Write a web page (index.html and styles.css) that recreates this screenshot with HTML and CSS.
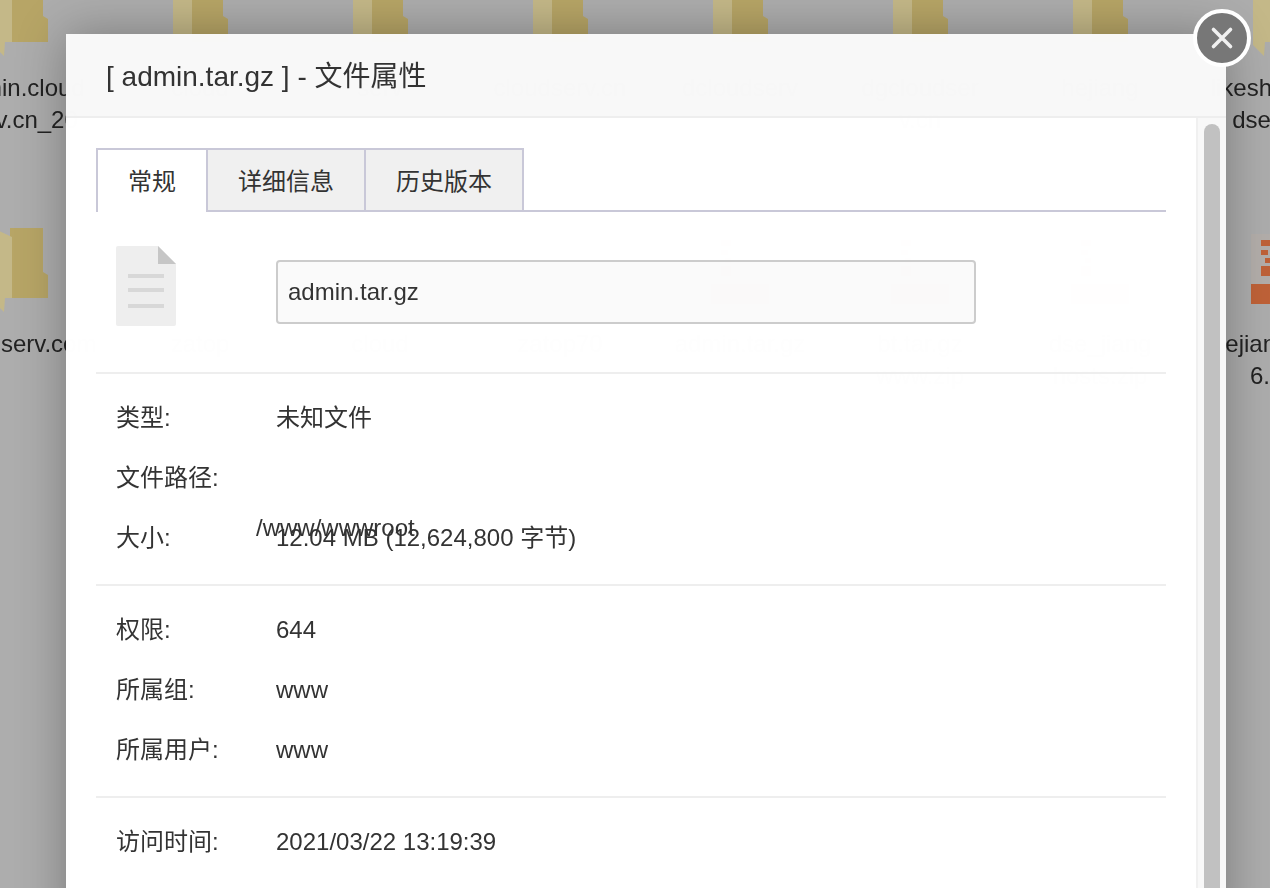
FILE: index.html
```html
<!DOCTYPE html>
<html lang="zh-CN">
<head>
<meta charset="utf-8">
<title>文件属性</title>
<link rel="stylesheet" href="styles.css">
</head>
<body>
<svg class="defs" width="0" height="0" aria-hidden="true">
  <symbol id="folder" viewBox="0 0 55 84">
    <path fill="#b7a566" d="M17 0H50V44L55 47V70H17Z"/>
    <path fill="#c4b888" d="M0 0 19 9V70H12L11 84 0 73Z"/>
  </symbol>
  <symbol id="archive" viewBox="0 0 58 70">
    <path fill="#b3aeaa" d="M0 0H58V50H0Z"/>
    <path fill="#bf6238" d="M0 50H58V70H0Z"/>
    <path fill="#bf6238" d="M10 6h10v6H10zM10 16h7v5h-7zM14 24h6v5h-6zM10 32h10v10H10z"/>
  </symbol>
</svg>

<div class="desktop">
  <div class="cell"><svg class="folder"><use href="#folder"/></svg><div class="name">admin.cloud<br>serv.cn_20</div></div>
  <div class="cell"><svg class="folder"><use href="#folder"/></svg><div class="name">cloud</div></div>
  <div class="cell"><svg class="folder"><use href="#folder"/></svg><div class="name">serv</div></div>
  <div class="cell"><svg class="folder"><use href="#folder"/></svg><div class="name">cloudserv.cn</div></div>
  <div class="cell"><svg class="folder"><use href="#folder"/></svg><div class="name">dcloudserv</div></div>
  <div class="cell"><svg class="folder"><use href="#folder"/></svg><div class="name">dgcloudser<br>v.cn</div></div>
  <div class="cell"><svg class="folder"><use href="#folder"/></svg><div class="name">hejiang</div></div>
  <div class="cell"><svg class="folder"><use href="#folder"/></svg><div class="name">likeshe.cloud<br>dserv.cn/</div></div>

  <div class="cell"><svg class="folder"><use href="#folder"/></svg><div class="name">cloudserv.com</div></div>
  <div class="cell"><div class="icon-gap"></div><div class="name">zatop</div></div>
  <div class="cell"><div class="icon-gap"></div><div class="name">cloud</div></div>
  <div class="cell"><div class="icon-gap"></div><div class="name">zatop70</div></div>
  <div class="cell"><svg class="archive"><use href="#archive"/></svg><div class="name">admin.tar.gz</div></div>
  <div class="cell"><svg class="archive"><use href="#archive"/></svg><div class="name">bt.tar.gz<br>www.zip</div></div>
  <div class="cell"><svg class="archive"><use href="#archive"/></svg><div class="name">dse_jiang<br>hosts.zip</div></div>
  <div class="cell"><svg class="archive"><use href="#archive"/></svg><div class="name">hejiang.shop<br>6.7.2f</div></div>
</div>

<div class="modal">
  <header class="modal-head">[ admin.tar.gz ] - 文件属性</header>
  <div class="modal-body">
    <main class="content">
      <nav class="tabs">
        <span class="tab tab-active">常规</span>
        <span class="tab">详细信息</span>
        <span class="tab">历史版本</span>
      </nav>

      <section class="file-head">
        <div class="file-icon">
          <svg width="60" height="80" viewBox="0 0 60 80">
            <path fill="#eeeeee" d="M2 0H42L60 18V78a2 2 0 0 1-2 2H2a2 2 0 0 1-2-2V2A2 2 0 0 1 2 0Z"/>
            <path fill="#c6c6c6" d="M42 0 60 18H42Z"/>
            <path fill="#d8d8d8" d="M12 28H48V32H12ZM12 42H48V46H12ZM12 58H48V62H12Z"/>
          </svg>
        </div>
        <div class="file-name">admin.tar.gz</div>
      </section>

      <section class="group">
        <div class="row"><span class="key">类型:</span><span class="val">未知文件</span></div>
        <div class="row"><span class="key">文件路径:</span><span class="val"><span class="path">/www/wwwroot</span></span></div>
        <div class="row"><span class="key">大小:</span><span class="val">12.04 MB (12,624,800 字节)</span></div>
      </section>

      <section class="group">
        <div class="row"><span class="key">权限:</span><span class="val">644</span></div>
        <div class="row"><span class="key">所属组:</span><span class="val">www</span></div>
        <div class="row"><span class="key">所属用户:</span><span class="val">www</span></div>
      </section>

      <section class="group">
        <div class="row"><span class="key">访问时间:</span><span class="val">2021/03/22 13:19:39</span></div>
      </section>
    </main>
    <div class="scrollbar"><div class="thumb"></div></div>
  </div>
  <button class="close" type="button" aria-label="关闭">
    <svg width="24" height="24" viewBox="0 0 24 24"><path d="M3.5 3.5 20.5 20.5M20.5 3.5 3.5 20.5" stroke="#f0f0f0" stroke-width="3.6" stroke-linecap="round" fill="none"/></svg>
  </button>
</div>
</body>
</html>
```

FILE: styles.css
```css
* { box-sizing: border-box; }

html, body {
  margin: 0;
  height: 100%;
  overflow: hidden;
}

body {
  background: #adadad;
  color: #333333;
  font-family: "Liberation Sans", "Noto Sans CJK SC", sans-serif;
  font-size: 24px;
}

.defs { position: absolute; }

.desktop {
  position: absolute;
  top: -28px;
  left: -70px;
  display: grid;
  grid-template-columns: repeat(8, 180px);
  grid-auto-rows: 256px;
  filter: blur(0.7px);
}

.cell {
  display: flex;
  flex-direction: column;
  align-items: center;
  min-width: 0;
}

.folder { width: 55px; height: 84px; flex: none; }
.icon-gap { height: 84px; flex: none; }
.archive { width: 58px; height: 70px; flex: none; margin-top: 6px; margin-bottom: 8px; }

.name {
  margin-top: 16px;
  line-height: 32px;
  color: #222222;
  text-align: center;
  white-space: nowrap;
}

.modal {
  position: absolute;
  top: 34px;
  left: 66px;
  width: 1160px;
  height: 900px;
  box-shadow: 0 0 46px rgba(0, 0, 0, 0.3);
}

.modal-head {
  height: 84px;
  padding-left: 40px;
  background: rgba(248, 248, 248, 0.996);
  border-bottom: 2px solid #eeeeee;
  font-size: 28px;
  line-height: 86px;
  color: #333333;
}

.modal-head,
.content { filter: blur(0.35px); }

.modal-body {
  display: flex;
  height: 816px;
  background: rgba(255, 255, 255, 0.996);
}

.content {
  flex: 1;
  min-width: 0;
  padding: 30px 30px 0;
}

.scrollbar {
  flex: none;
  width: 30px;
  padding: 6px 6px 0;
  background: #f8f8f8;
  border-left: 2px solid #f0f0f0;
}

.thumb {
  height: 100%;
  background: #c1c1c1;
  border-radius: 8px 8px 0 0;
}

.tabs {
  display: flex;
  height: 64px;
  border-bottom: 2px solid #c9c8d8;
}

.tab {
  width: 158px;
  height: 64px;
  line-height: 64px;
  text-align: center;
  background: #f0f0f0;
  border: 2px solid #c9c8d8;
  border-left: 0;
  color: #333333;
}

.tab-active {
  width: 112px;
  background: #ffffff;
  border-left: 2px solid #c9c8d8;
  border-bottom: 0;
}

.file-head {
  display: flex;
  align-items: flex-start;
  height: 162px;
  padding: 34px 0 0 20px;
  border-bottom: 2px solid #eeeeee;
}

.file-icon {
  width: 160px;
  height: 80px;
  flex: none;
}

.file-icon svg { display: block; }

.file-name {
  width: 700px;
  height: 64px;
  margin-top: 14px;
  padding-left: 10px;
  line-height: 60px;
  background: rgba(240, 240, 240, 0.33);
  border: 2px solid #cccccc;
  border-radius: 4px;
}

.group {
  padding: 14px 0 16px 20px;
  border-bottom: 2px solid #eeeeee;
}

.row {
  display: flex;
  height: 60px;
  line-height: 60px;
}

.key { width: 160px; flex: none; }

.val { position: relative; flex: 1; }

.path {
  position: absolute;
  top: 50px;
  left: -20px;
  white-space: nowrap;
}

.close {
  position: absolute;
  top: -25px;
  right: -25px;
  display: flex;
  align-items: center;
  justify-content: center;
  width: 58px;
  height: 58px;
  padding: 0;
  background: #777777;
  border: 4px solid #ffffff;
  border-radius: 50%;
}
```
